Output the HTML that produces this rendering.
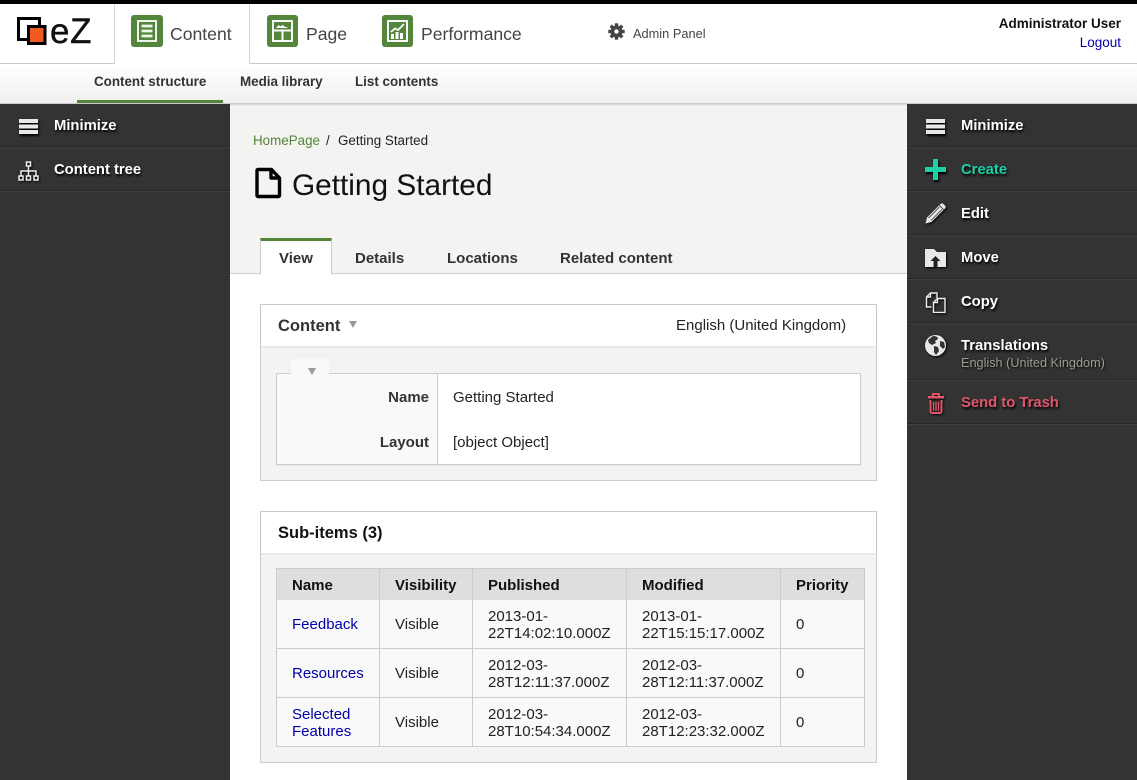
<!DOCTYPE html>
<html><head><meta charset="utf-8">
<style>
*{box-sizing:border-box}
html,body{margin:0;padding:0;width:1137px;height:780px;overflow:hidden;background:#fff;font-family:"Liberation Sans",sans-serif;color:#222;font-size:15px}
.a{position:absolute;white-space:nowrap}
a{text-decoration:none}
.ic{position:absolute;display:block}
.side{position:absolute;top:104px;width:230px;height:676px;background:#333}
.sep{position:absolute;left:0;width:230px;height:2px;background:linear-gradient(#262626 50%,#404040 50%)}
.sl{position:absolute;left:54px;font-weight:bold;font-size:14.800px;line-height:16px;color:#fff;text-shadow:1px 2px 2px #000;white-space:nowrap}
.th{font-weight:bold;color:#111}
.sn{top:74px;font-size:13.400px;line-height:15px;font-weight:bold;color:#333}
.nv{top:24px;font-size:17.600px;line-height:20px;color:#444}
.tb{top:250px;font-size:15px;line-height:17px;font-weight:bold;color:#333}
</style></head>
<body>
<div class="a" style="left:0;top:0;width:1137px;height:4px;background:#000"></div>
<!-- header -->
<div class="a" style="left:0;top:63px;width:1137px;height:1px;background:#c9c9c9"></div>
<div class="a" style="left:0;top:64px;width:1137px;height:39px;background:linear-gradient(#fff,#f0f0f0)"></div>
<div class="a" style="left:0;top:103px;width:1137px;height:4px;background:linear-gradient(#c4c4c4,rgba(230,230,230,0))"></div>
<div class="a" style="left:114px;top:4px;width:1px;height:60px;background:#d5d5d5"></div>
<div class="a" style="left:249px;top:4px;width:1px;height:60px;background:#d5d5d5"></div>
<div class="a" style="left:115px;top:60px;width:134px;height:8px;background:#fff"></div>
<!-- logo -->
<svg class="ic" style="left:15px;top:15px" width="34" height="32" viewBox="0 0 34 32">
<rect x="3.500" y="3.500" width="21" height="21" fill="#fff" stroke="#000" stroke-width="3"/>
<rect x="13.500" y="11.500" width="16.500" height="17" fill="#f15a22" stroke="#000" stroke-width="3"/>
</svg>
<div class="a" style="left:50px;top:12px;font-size:35px;line-height:40px;color:#111;letter-spacing:.6px;-webkit-text-stroke:.4px #111">eZ</div>
<!-- nav -->
<svg class="ic" style="left:131px;top:15px" width="32" height="32" viewBox="0 0 32 32"><rect width="32" height="32" rx="3" fill="#53853a"/><rect x="7" y="6" width="18" height="20" fill="none" stroke="#fff" stroke-width="2" opacity=".9"/><path d="M10.500 11h11M10.500 16h11M10.500 21h11" stroke="#fff" stroke-width="2.800" opacity=".9"/></svg>
<div class="a nv" style="left:170px">Content</div>
<svg class="ic" style="left:267px;top:15px" width="31" height="32" viewBox="0 0 31 32"><rect width="31" height="32" rx="3" fill="#53853a"/><rect x="6" y="6" width="19" height="20" fill="none" stroke="#fff" stroke-width="2" opacity=".95"/><path d="M6 15.500h19M15.500 15.500V26" stroke="#fff" stroke-width="2" fill="none"/><path d="M9 13l2.500-3 2 1.500 2-1.500 2 1.500 4 1.500z" fill="#fff"/></svg>
<div class="a nv" style="left:306px">Page</div>
<svg class="ic" style="left:382px;top:15px" width="31" height="32" viewBox="0 0 31 32"><rect width="31" height="32" rx="3" fill="#53853a"/><rect x="6" y="6" width="19" height="20" fill="none" stroke="#fff" stroke-width="2" opacity=".95"/><path d="M9 24v-5h3v5zM13.500 24v-7h3v7zM18 24v-6h3v6z" fill="#fff"/><path d="M9 17l4-3.500 3 1.500 6-6" fill="none" stroke="#fff" stroke-width="1.800"/></svg>
<div class="a nv" style="left:421px">Performance</div>
<svg class="ic" style="left:608px;top:23px" width="17" height="17" viewBox="0 0 17 17"><g fill="#444"><circle cx="8.500" cy="8.500" r="6"/><rect x="6.800" y="0.300" width="3.400" height="16.400"/><rect x="0.300" y="6.800" width="16.400" height="3.400"/><rect x="6.800" y="0.300" width="3.400" height="16.400" transform="rotate(45 8.500 8.500)"/><rect x="6.800" y="0.300" width="3.400" height="16.400" transform="rotate(-45 8.500 8.500)"/></g><circle cx="8.500" cy="8.500" r="2.200" fill="#fff"/></svg>
<div class="a" style="left:633px;top:26px;font-size:12.800px;line-height:15px;color:#444">Admin Panel</div>
<div class="a" style="right:16px;top:16px;font-size:13.500px;line-height:15px;font-weight:bold;color:#111">Administrator User</div>
<a class="a" href="#" style="right:16px;top:35px;font-size:13.500px;line-height:15px;color:#00a">Logout</a>
<!-- subnav -->
<div class="a sn" style="left:94px">Content structure</div>
<div class="a sn" style="left:240px">Media library</div>
<div class="a sn" style="left:355px">List contents</div>
<div class="a" style="left:77px;top:100px;width:146px;height:3px;background:#53853a"></div>
<!-- main top -->
<div class="a" style="left:230px;top:107px;width:677px;height:166px;background:#f4f3f2"></div>
<div class="a" style="left:230px;top:273px;width:677px;height:1px;background:#d0d0d0"></div>
<div class="a" style="left:253px;top:133px;font-size:13.400px;line-height:16px;color:#53853a">HomePage</div>
<div class="a" style="left:326px;top:133px;font-size:13.400px;line-height:16px;color:#222">/</div>
<div class="a" style="left:338px;top:133px;font-size:13.400px;line-height:16px;color:#222">Getting Started</div>
<svg class="ic" style="left:254px;top:167px" width="28" height="32" viewBox="0 0 28 32"><path d="M3 3.500a1 1 0 0 1 1-1h13.500l8 8.500V28.500a1 1 0 0 1-1 1H4a1 1 0 0 1-1-1zM17 3v8h8" fill="none" stroke="#000" stroke-width="3.400" stroke-linejoin="round"/></svg>
<div class="a" style="left:292px;top:168px;font-size:29.800px;line-height:35px;color:#111">Getting Started</div>
<!-- tabs -->
<div class="a" style="left:260px;top:238px;width:72px;height:37px;background:#fff;border:1px solid #ccc;border-top:3px solid #53853a;border-bottom:0"></div>
<div class="a tb" style="left:279px">View</div>
<div class="a tb" style="left:355px">Details</div>
<div class="a tb" style="left:447px">Locations</div>
<div class="a tb" style="left:560px">Related content</div>
<!-- panel 1 -->
<div class="a" style="left:260px;top:304px;width:617px;height:177px;background:#f4f3f2;border:1px solid #ccc"></div>
<div class="a" style="left:261px;top:305px;width:615px;height:41px;background:#fff;box-shadow:0 1px 2px rgba(0,0,0,.08)"></div>
<div class="a" style="left:278px;top:317px;font-size:16.500px;line-height:19px;font-weight:bold;color:#333">Content</div>
<div class="a" style="left:349px;top:321px;width:0;height:0;border-left:4.500px solid transparent;border-right:4.500px solid transparent;border-top:7px solid #999"></div>
<div class="a" style="left:676px;top:317px;font-size:15px;line-height:17px;color:#222">English (United Kingdom)</div>
<div class="a" style="left:276px;top:373px;width:585px;height:92px;background:#fff;border:1px solid #ccc;box-shadow:0 1px 1px rgba(0,0,0,.06)"></div>
<div class="a" style="left:277px;top:374px;width:161px;height:90px;background:#f9f9f9;border-right:1px solid #ccc"></div>
<div class="a" style="left:291px;top:359px;width:38px;height:15px;background:#f9f9f9"></div>
<div class="a" style="left:308px;top:368px;width:0;height:0;border-left:4.500px solid transparent;border-right:4.500px solid transparent;border-top:7px solid #999"></div>
<div class="a" style="right:708px;top:389px;line-height:17px;font-weight:bold;color:#333">Name</div>
<div class="a" style="right:708px;top:434px;line-height:17px;font-weight:bold;color:#333">Layout</div>
<div class="a" style="left:453px;top:389px;line-height:17px;color:#222">Getting Started</div>
<div class="a" style="left:453px;top:434px;line-height:17px;color:#222">[object Object]</div>
<!-- panel 2 -->
<div class="a" style="left:260px;top:511px;width:617px;height:252px;background:#f4f3f2;border:1px solid #ccc"></div>
<div class="a" style="left:261px;top:512px;width:615px;height:41px;background:#fff;box-shadow:0 1px 2px rgba(0,0,0,.08)"></div>
<div class="a" style="left:278px;top:524px;font-size:16.500px;line-height:19px;font-weight:bold;color:#111">Sub-items (3)</div>
<div class="a" style="left:276px;top:568px;width:589px;height:179px;background:#f9f9f9;border:1px solid #ccc"></div>
<div class="a" style="left:277px;top:569px;width:587px;height:31px;background:#dedede"></div>
<div class="a" style="left:277px;top:648px;width:587px;height:1px;background:#ccc"></div>
<div class="a" style="left:277px;top:697px;width:587px;height:1px;background:#ccc"></div>
<div class="a" style="left:379px;top:569px;width:1px;height:177px;background:#ccc"></div>
<div class="a" style="left:472px;top:569px;width:1px;height:177px;background:#ccc"></div>
<div class="a" style="left:626px;top:569px;width:1px;height:177px;background:#ccc"></div>
<div class="a" style="left:780px;top:569px;width:1px;height:177px;background:#ccc"></div>
<div class="a th" style="left:292px;top:577px;line-height:17px">Name</div>
<div class="a th" style="left:395px;top:577px;line-height:17px">Visibility</div>
<div class="a th" style="left:488px;top:577px;line-height:17px">Published</div>
<div class="a th" style="left:642px;top:577px;line-height:17px">Modified</div>
<div class="a th" style="left:796px;top:577px;line-height:17px">Priority</div>
<a class="a" href="#" style="left:292px;top:616px;line-height:17px;color:#00a">Feedback</a>
<a class="a" href="#" style="left:292px;top:665px;line-height:17px;color:#00a">Resources</a>
<a class="a" href="#" style="left:292px;top:706px;line-height:17px;color:#00a">Selected<br>Features</a>
<div class="a" style="left:395px;top:616px;line-height:17px">Visible</div>
<div class="a" style="left:395px;top:665px;line-height:17px">Visible</div>
<div class="a" style="left:395px;top:714px;line-height:17px">Visible</div>
<div class="a" style="left:488px;top:608px;line-height:17px">2013-01-<br>22T14:02:10.000Z</div>
<div class="a" style="left:642px;top:608px;line-height:17px">2013-01-<br>22T15:15:17.000Z</div>
<div class="a" style="left:488px;top:657px;line-height:17px">2012-03-<br>28T12:11:37.000Z</div>
<div class="a" style="left:642px;top:657px;line-height:17px">2012-03-<br>28T12:11:37.000Z</div>
<div class="a" style="left:488px;top:706px;line-height:17px">2012-03-<br>28T10:54:34.000Z</div>
<div class="a" style="left:642px;top:706px;line-height:17px">2012-03-<br>28T12:23:32.000Z</div>
<div class="a" style="left:796px;top:616px;line-height:17px">0</div>
<div class="a" style="left:796px;top:665px;line-height:17px">0</div>
<div class="a" style="left:796px;top:714px;line-height:17px">0</div>
<!-- left sidebar -->
<div class="side" style="left:0">
 <div class="sep" style="top:42px"></div>
 <div class="sep" style="top:86px"></div>
 <svg class="ic" style="left:19px;top:15px;filter:drop-shadow(1px 2px 1px #000)" width="19" height="15" viewBox="0 0 19 15"><path d="M0 0h19v4H0zM0 5.500h19v4H0zM0 11h19v4H0z" fill="#e8e8e8"/></svg>
 <div class="sl" style="top:14px">Minimize</div>
 <svg class="ic" style="left:18px;top:57px;filter:drop-shadow(1px 1px 1px #000)" width="21" height="20" viewBox="0 0 21 20"><g fill="none" stroke="#eee" stroke-width="1.500"><rect x="8.500" y="1" width="4" height="4"/><rect x="1" y="15" width="4" height="4"/><rect x="8.500" y="15" width="4" height="4"/><rect x="16" y="15" width="4" height="4"/><path d="M10.500 5v10M3 15V10h15v5"/></g></svg>
 <div class="sl" style="top:58px">Content tree</div>
</div>
<!-- right sidebar -->
<div class="side" style="left:907px">
 <div class="sep" style="top:42px"></div>
 <div class="sep" style="top:86px"></div>
 <div class="sep" style="top:130px"></div>
 <div class="sep" style="top:174px"></div>
 <div class="sep" style="top:218px"></div>
 <div class="sep" style="top:275px"></div>
 <div class="sep" style="top:319px"></div>
 <svg class="ic" style="left:19px;top:15px;filter:drop-shadow(1px 2px 1px #000)" width="19" height="15" viewBox="0 0 19 15"><path d="M0 0h19v4H0zM0 5.500h19v4H0zM0 11h19v4H0z" fill="#e8e8e8"/></svg>
 <div class="sl" style="top:14px">Minimize</div>
 <svg class="ic" style="left:18px;top:55px;filter:drop-shadow(1px 2px 1px #000)" width="21" height="21" viewBox="0 0 21 21"><path d="M8 0h5v8h8v5h-8v8H8v-8H0V8h8z" fill="#1bd1a5"/></svg>
 <div class="sl" style="top:58px;color:#1bd1a5">Create</div>
 <svg class="ic" style="left:18px;top:99px;filter:drop-shadow(1px 1px 1px #000)" width="21" height="21" viewBox="0 0 21 21"><path d="M0.500 20.500l1.500-6L14 2.500 18.500 7 6.500 19z" fill="#e8e8e8"/><path d="M3.500 15L14.500 4M6 17.500L17 6.500" stroke="#555" stroke-width=".9"/><path d="M15.500 1a2 2 0 0 1 3 0l1.500 1.500a2 2 0 0 1 0 3l-1 1-4.500-4.500z" fill="#e8e8e8"/></svg>
 <div class="sl" style="top:102px">Edit</div>
 <svg class="ic" style="left:18px;top:145px;filter:drop-shadow(1px 1px 1px #000)" width="21" height="18" viewBox="0 0 21 18"><path d="M0 0h9l3 3h9v15H0z" fill="#e8e8e8"/><path d="M10.500 7l-5 5h3v6h4v-6h3z" fill="#222"/></svg>
 <div class="sl" style="top:146px">Move</div>
 <svg class="ic" style="left:18px;top:188px;filter:drop-shadow(1px 1px 1px #000)" width="21" height="21" viewBox="0 0 21 21"><path d="M12 6V1H5.500L1.500 5v10h5M1.500 5h4V1" fill="none" stroke="#eee" stroke-width="1.400"/><path d="M12.500 6.500h7.500v14H8.500V10.500zM8.500 10.500h4v-4" fill="none" stroke="#eee" stroke-width="1.400"/></svg>
 <div class="sl" style="top:190px">Copy</div>
 <svg class="ic" style="left:18px;top:231px;filter:drop-shadow(1px 1px 1px #000)" width="21" height="21" viewBox="0 0 21 21"><circle cx="10.500" cy="10.500" r="10.500" fill="#e8e8e8"/><path d="M8 1c3 0 5 1 5 3l-3 2 1 2-4 2-3-2-1-3zM9 11l4 1 1 4-3 4-2-3zM15 6l4 1 1 5-2 2-3-3z" fill="#333"/></svg>
 <div class="sl" style="top:234px">Translations</div>
 <div class="a" style="left:54px;top:252px;font-size:12.700px;line-height:15px;color:#9aa08f;text-shadow:1px 1px 2px #000">English (United Kingdom)</div>
 <svg class="ic" style="left:21px;top:289px;filter:drop-shadow(1px 1px 1px #000)" width="16" height="21" viewBox="0 0 16 21"><path d="M0 3h16v2.500H0z" fill="#e0566b"/><path d="M5 3.500V1h6v2.500M2.500 7v11.500a1.500 1.500 0 0 0 1.500 1.500h8a1.500 1.500 0 0 0 1.500-1.500V7" fill="none" stroke="#e0566b" stroke-width="1.900"/><path d="M5.500 9v9M8 9v9M10.500 9v9" stroke="#e0566b" stroke-width="1.400"/></svg>
 <div class="sl" style="top:291px;color:#e0566b">Send to Trash</div>
</div>
</body></html>
